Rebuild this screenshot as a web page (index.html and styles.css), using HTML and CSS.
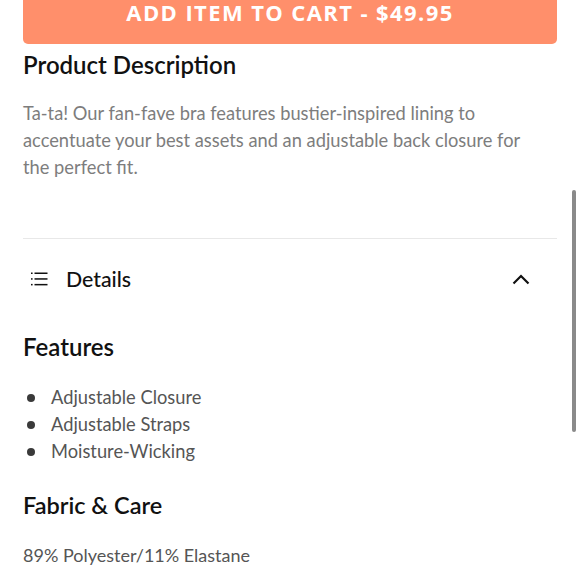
FILE: index.html
```html
<!DOCTYPE html>
<html lang="en">
<head>
<meta charset="utf-8">
<link rel="stylesheet" href="styles.css">
</head>
<body>
<div class="page">
  <button class="cart-btn">ADD ITEM TO CART - $49.95</button>
  <h2 class="title">Product Description</h2>
  <p class="desc">Ta-ta! Our fan-fave bra features bustier-inspired lining to accentuate your best assets and an adjustable back closure for the perfect fit.</p>
  <hr class="divider">
  <div class="acc-head">
    <svg class="list-icon" width="18" height="14" viewBox="0 0 18 14">
      <g fill="#111">
        <rect x="0" y="0.5" width="1.6" height="1.5"/>
        <rect x="0" y="6.2" width="1.6" height="1.5"/>
        <rect x="0" y="11.9" width="1.6" height="1.5"/>
        <rect x="3.5" y="0.5" width="13" height="1.5"/>
        <rect x="3.5" y="6.2" width="13" height="1.5"/>
        <rect x="3.5" y="11.9" width="13" height="1.5"/>
      </g>
    </svg>
    <span class="acc-title">Details</span>
    <svg class="chev" width="18" height="11" viewBox="0 0 18 11">
      <path d="M1.5 9.5 L9 2 L16.5 9.5" fill="none" stroke="#111" stroke-width="2.2"/>
    </svg>
  </div>
  <h3 class="sub">Features</h3>
  <ul class="bullets">
    <li>Adjustable Closure</li>
    <li>Adjustable Straps</li>
    <li>Moisture-Wicking</li>
  </ul>
  <h3 class="sub sub2">Fabric &amp; Care</h3>
  <p class="fabric">89% Polyester/11% Elastane</p>
</div>
<div class="scrollbar"></div>
</body>
</html>
```
FILE: styles.css
```css
html, body {
  margin: 0;
  padding: 0;
  background: #fff;
  overflow: hidden;
  height: 580px;
}
body {
  font-family: "Lato", "Liberation Sans", sans-serif;
  color: #111;
}
.page {
  padding: 0 23px;
}
.cart-btn {
  display: block;
  box-sizing: border-box;
  width: 100%;
  height: 60px;
  margin-top: -16px;
  border: none;
  border-radius: 5px;
  background: #ff8f6b;
  color: #fff;
  font-family: "Open Sans", "Liberation Sans", sans-serif;
  font-weight: 700;
  font-size: 22px;
  letter-spacing: 1.4px;
  padding: 0 0 4px;
  line-height: 24px;
}
.title {
  margin: 6px 0 0;
  font-size: 24px;
  line-height: 30px;
  font-weight: 600;
  color: #111;
}
.desc {
  margin: 20px 0 0;
  max-width: 520px;
  font-size: 18.3px;
  line-height: 27px;
  color: #7d7d7d;
}
.divider {
  margin: 57px 0 0;
  border: none;
  border-top: 1px solid #e8e8e8;
  height: 0;
}
.acc-head {
  display: flex;
  align-items: center;
  height: 80px;
  padding: 0 27px 0 8px;
}
.list-icon {
  flex: none;
}
.acc-title {
  margin-left: 17px;
  font-size: 21.3px;
  font-weight: 500;
  flex: 1;
}
.chev {
  flex: none;
}
.sub {
  margin: 13px 0 0;
  font-size: 24px;
  line-height: 30px;
  font-weight: 600;
}
.bullets {
  margin: 22px 0 0;
  padding: 0;
  list-style: none;
}
.bullets li {
  position: relative;
  padding-left: 28px;
  font-size: 18.3px;
  line-height: 27px;
  color: #555;
}
.bullets li::before {
  content: "";
  position: absolute;
  left: 4px;
  top: 10px;
  width: 8px;
  height: 8px;
  border-radius: 50%;
  background: #3a3a3a;
}
.sub2 {
  margin-top: 25px;
  font-size: 23.5px;
}
.fabric {
  margin: 22px 0 0;
  font-size: 18px;
  line-height: 27px;
  color: #555;
}
.scrollbar {
  position: fixed;
  left: 572px;
  top: 190px;
  width: 4px;
  height: 242px;
  border-radius: 2px;
  background: #8a8a8a;
}
```
